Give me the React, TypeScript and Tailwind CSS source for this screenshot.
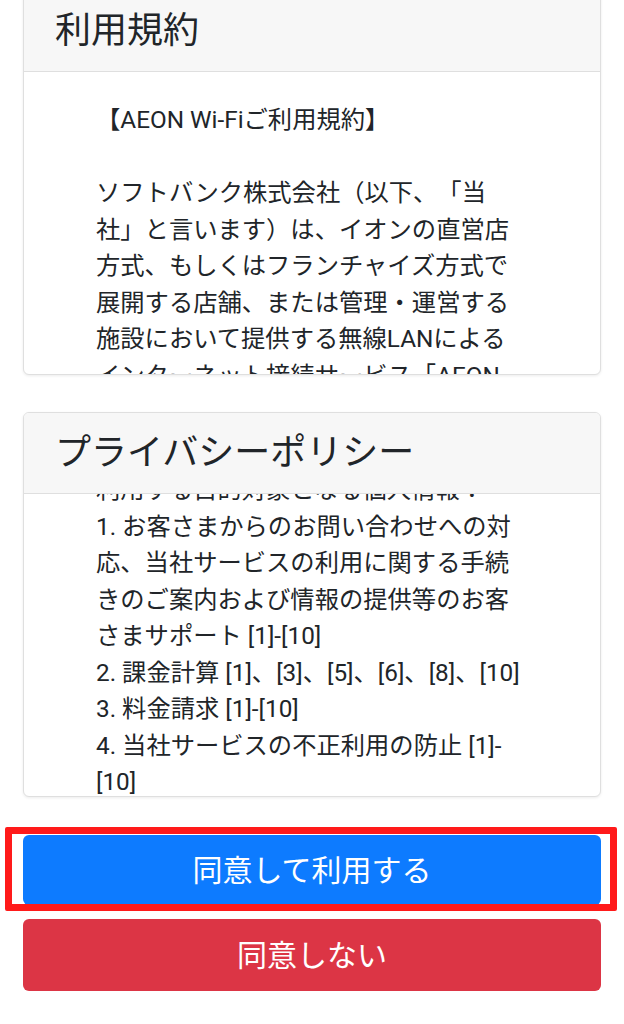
const terms = [
  "【AEON Wi-Fiご利用規約】",
  "",
  "ソフトバンク株式会社（以下、「当社」と言います）は、イオンの直営店方式、もしくはフランチャイズ方式で展開する店舗、または管理・運営する施設において提供する無線LANによるインターネット接続サービス「AEON Wi-Fi」（以下、「本サービス」と言います）の利用について、以下のとおり規約を定めます。",
];

const privacy = [
  "利用する目的対象となる個人情報：",
  "1. お客さまからのお問い合わせへの対応、当社サービスの利用に関する手続きのご案内および情報の提供等のお客さまサポート [1]-[10]",
  "2. 課金計算 [1]、[3]、[5]、[6]、[8]、[10]",
  "3. 料金請求 [1]-[10]",
  "4. 当社サービスの不正利用の防止 [1]-[10]",
  "5. 当社サービスの改善 [1]-[10]",
];

function PolicyCard({
  title,
  lines,
  offset,
}: {
  title: string;
  lines: string[];
  offset: string;
}) {
  return (
    <div className="rounded-[6px] border border-[#dfdfdf] bg-white shadow-[0_1px_3px_rgba(0,0,0,0.08)] overflow-hidden">
      <div className="bg-[#f7f7f7] border-b border-[#dfdfdf] px-[31px] h-[81px] flex items-center">
        <h2 className="text-[36px] leading-[43px] text-[#212529]">{title}</h2>
      </div>
      <div className="h-[302px] overflow-hidden pl-[72px] pr-[78px] pt-[30px]">
        <div className={offset}>
          {lines.map((l, i) => (
            <p
              key={i}
              className="text-[24.3px] leading-[36.5px] min-h-[36.5px] text-[#212529] [text-spacing-trim:space-all]"
            >
              {l}
            </p>
          ))}
        </div>
      </div>
    </div>
  );
}

export default function App() {
  return (
    <div
      className="w-[624px] h-[1024px] overflow-hidden bg-white"
      style={{ fontFamily: 'Roboto, "Noto Sans CJK JP", sans-serif' }}
    >
      <div className="-mt-[10px] px-[23px] flex flex-col">
        <PolicyCard title="利用規約" lines={terms} offset="" />
        <div className="mt-[37px]">
          <PolicyCard title="プライバシーポリシー" lines={privacy} offset="-mt-[52px]" />
        </div>

        {/* agree button, highlighted with a red frame */}
        <div className="relative mt-[38px]">
          <button className="w-full h-[70px] rounded-[6px] bg-[#0d7bff] text-white text-[30px]">
            同意して利用する
          </button>
          <div className="absolute -left-[18px] -right-[16px] -top-[8px] -bottom-[6px] border-[7px] border-[#ff1a1a] rounded-[2px] pointer-events-none" />
        </div>

        <button className="mt-[14px] w-full h-[72px] rounded-[6px] bg-[#dc3545] text-white text-[30px]">
          同意しない
        </button>
      </div>
    </div>
  );
}
